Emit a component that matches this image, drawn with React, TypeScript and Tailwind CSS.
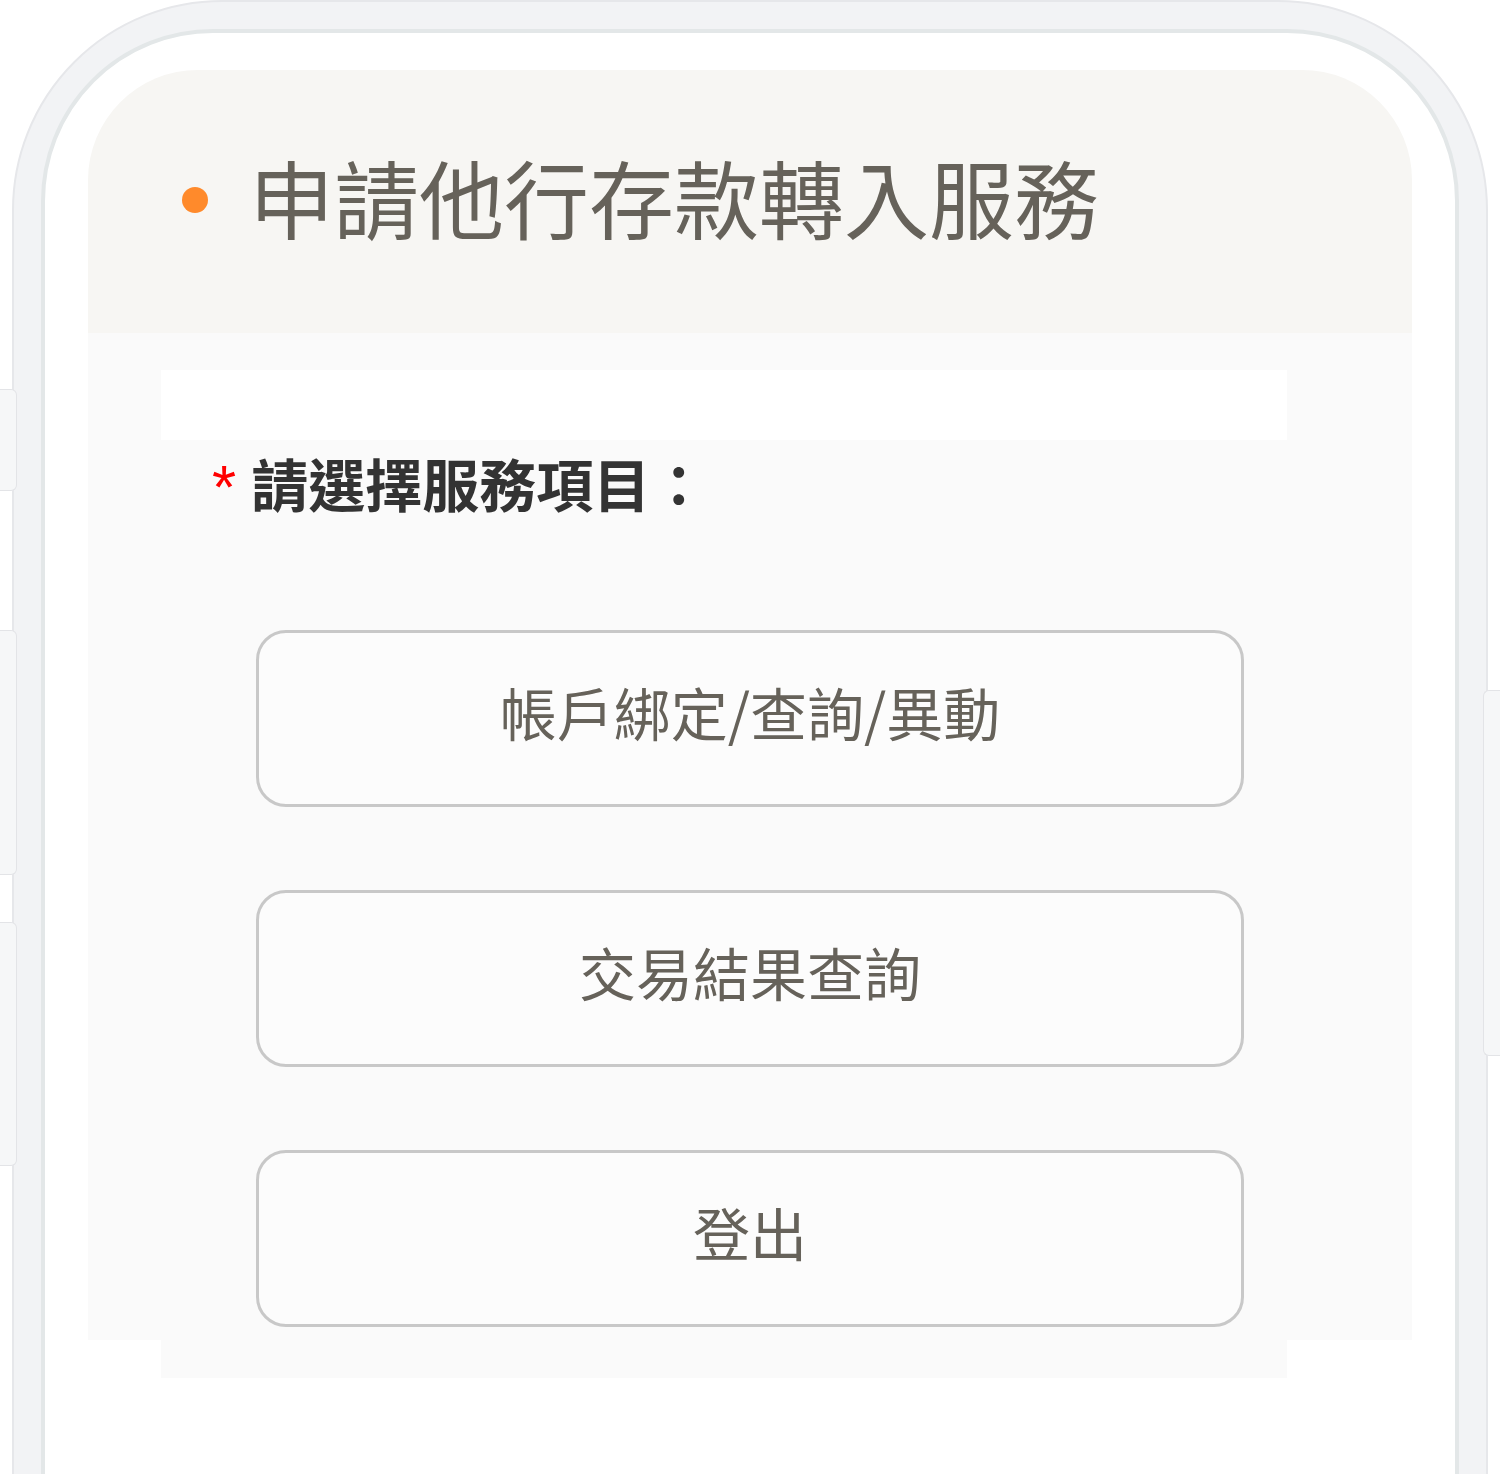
import React from 'react'

const font = { fontFamily: "'Noto Sans CJK TC', 'Noto Sans', sans-serif" }

const items = ['帳戶綁定/查詢/異動', '交易結果查詢', '登出']

const App = () => {
  return (
    <div className='relative w-[1500px] h-[1474px] overflow-hidden bg-white' style={font}>
      {/* side keys */}
      <div className='absolute left-0 top-[389px] w-[17px] h-[102px] rounded-r-[6px] bg-[#f6f7f8] border border-l-0 border-[#e3e4e7]'></div>
      <div className='absolute left-0 top-[630px] w-[17px] h-[245px] rounded-r-[6px] bg-[#f6f7f8] border border-l-0 border-[#e3e4e7]'></div>
      <div className='absolute left-0 top-[922px] w-[17px] h-[244px] rounded-r-[6px] bg-[#f6f7f8] border border-l-0 border-[#e3e4e7]'></div>
      <div className='absolute right-0 top-[690px] w-[17px] h-[366px] rounded-l-[6px] bg-[#f6f7f8] border border-r-0 border-[#e3e4e7]'></div>

      <div className='ml-[12px] w-[1476px] h-[1700px] rounded-[210px] bg-[#f2f3f5] p-[27px] pb-0 border-[2px] border-[#e6e7ea]'>
        <div className='h-full rounded-[172px] border-[4px] border-[#e3e7e8] bg-white pt-[37px] px-[43px]'>
          {/* header */}
          <div className='h-[263px] rounded-t-[110px] bg-[#f7f6f3] flex items-center pl-[94px]'>
            <span className='w-[26px] h-[26px] rounded-full bg-[#ff8a2b] mt-[-4px]'></span>
            <h1 className='ml-[41px] text-[85px] leading-none text-[#66625a] font-normal mt-[-12px]'>申請他行存款轉入服務</h1>
          </div>

          {/* content */}
          <div className='bg-[#fafafa] pt-[37px] h-[1007px]'>
            <div className='ml-[73px] w-[1126px] bg-[#fafafa] h-[1008px]'>
              <div className='h-[70px] bg-white'></div>
              <div className='mt-[14px] ml-[51px] flex items-center h-[57px]'>
                <span className='text-[62px] leading-none text-[#ff0000] mr-[15px] mt-[8px]' style={{ fontFamily: "'Liberation Sans', sans-serif" }}>*</span>
                <span className='text-[57px] leading-none font-bold text-[#333333]'>請選擇服務項目：</span>
              </div>
              <div className='mt-[119px] ml-[95px] w-[988px] flex flex-col gap-[83px]'>
                {items.map((t) => (
                  <button
                    key={t}
                    className='h-[177px] w-full rounded-[30px] border-[3px] border-[#c8c8c8] bg-[#fcfcfc] flex items-center justify-center text-[57px] leading-none text-[#66625a]'
                  >
                    <span className='mt-[-14px]'>{t}</span>
                  </button>
                ))}
              </div>
            </div>
          </div>
        </div>
      </div>
    </div>
  )
}

export default App
